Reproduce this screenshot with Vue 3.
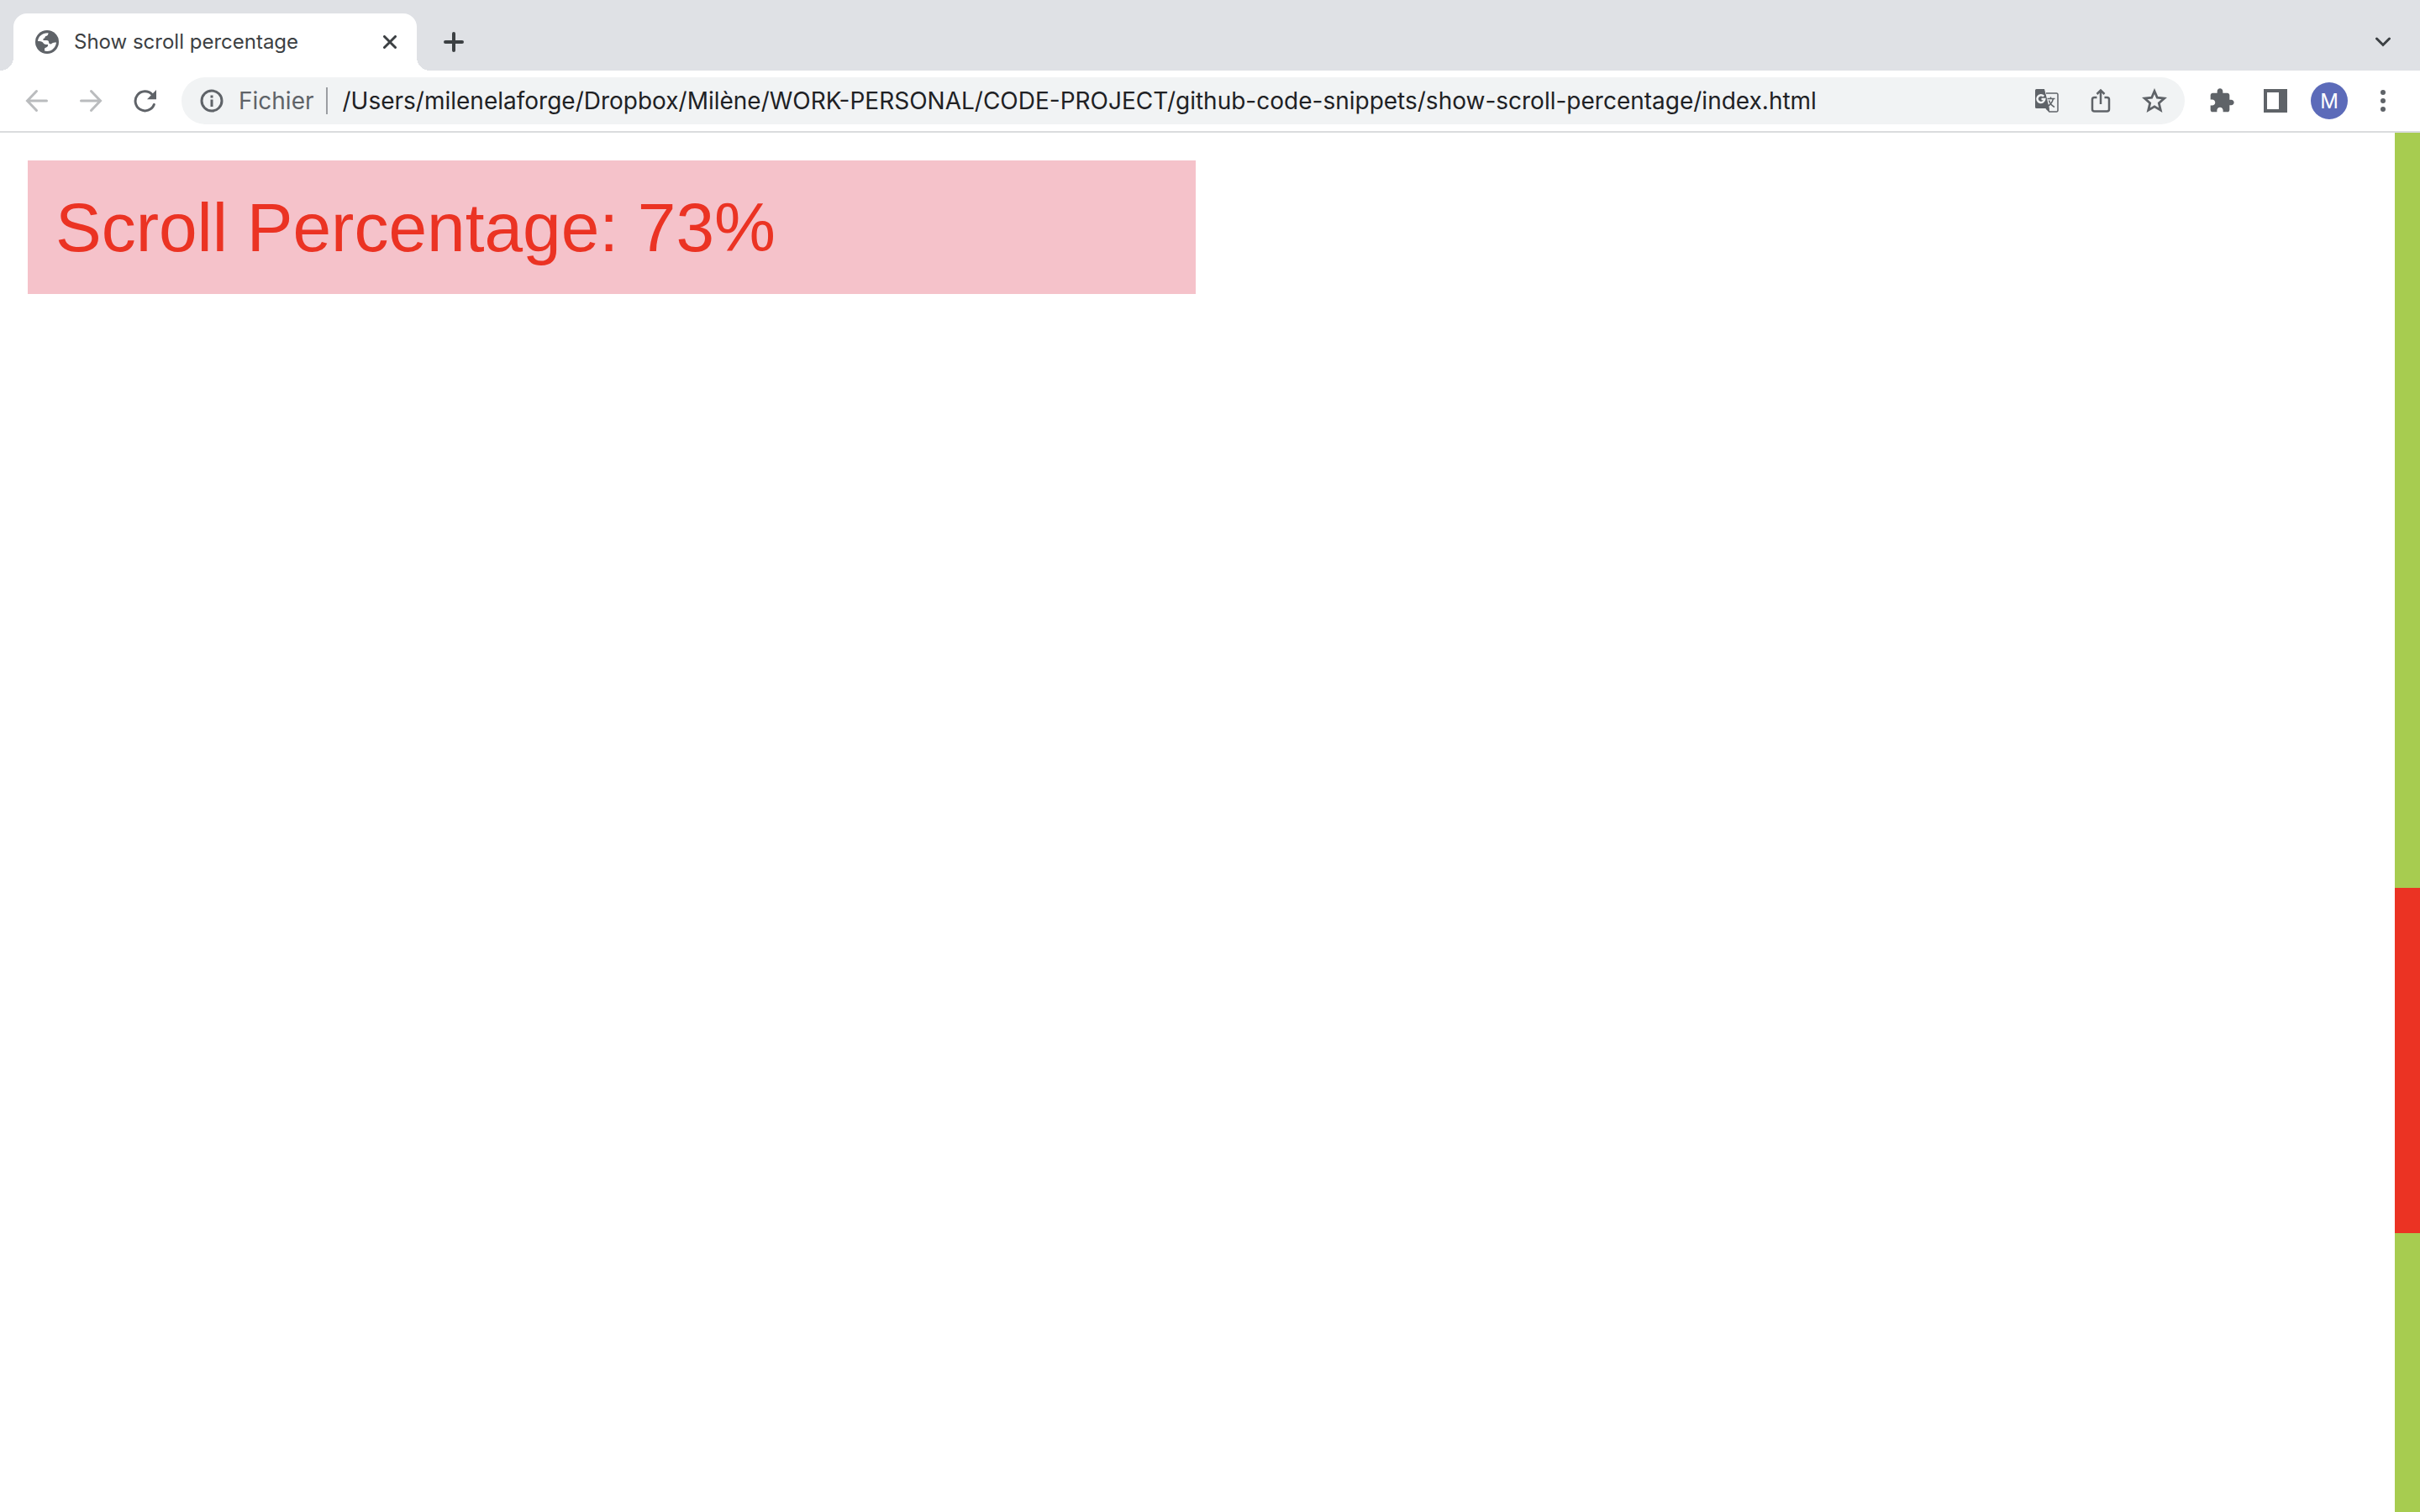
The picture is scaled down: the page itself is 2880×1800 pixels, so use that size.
<script setup>
import { ref, computed } from 'vue'

const title = 'Show scroll percentage'
const url = ref('/Users/milenelaforge/Dropbox/Milène/WORK-PERSONAL/CODE-PROJECT/github-code-snippets/show-scroll-percentage/index.html')
const percentage = ref(73)
const thumbShare = 25

const before = computed(() => (100 - thumbShare) * percentage.value)
const after = computed(() => (100 - thumbShare) * (100 - percentage.value))
</script>

<template>
  <div class="browser">
    <header>
      <div class="tab-strip">
        <div class="tab">
          <svg class="icon" width="28" height="28" viewBox="0 0 28 28" aria-hidden="true">
            <circle cx="14" cy="14" r="14" fill="#5f6368" />
            <path fill="#fff" d="M3 13C3.5 7.500 8 3 15.500 3.200C15.700 5.500 14 7 12.500 7C11.500 7.200 11.500 9 11 9.500L9.500 10V12H13.500C15.500 12 16.200 13.300 16.200 15C17 17 19 16.500 20 15.500C21 14.500 23 14.500 25 14.500C24.500 20 20 25 14 25L11 24.600V22C11 20.500 15 20.800 15 18V17C11 17 10.500 16.500 9 14.500C8 13.300 5 13 3 13Z" />
          </svg>
          <span class="tab-title">{{ title }}</span>
          <button class="close" type="button" aria-label="Close tab">
            <svg width="16" height="16" viewBox="0 0 16 16"><path d="M1.500 1.500l13 13M14.500 1.500l-13 13" fill="none" stroke="#3c4043" stroke-width="3" stroke-linecap="round" /></svg>
          </button>
        </div>
        <button class="new-tab" type="button" aria-label="New tab">
          <svg width="24" height="24" viewBox="0 0 24 24"><path d="M12 2v20M2 12h20" fill="none" stroke="#3c4043" stroke-width="4" stroke-linecap="round" /></svg>
        </button>
        <button class="tab-search" type="button" aria-label="Search tabs">
          <svg width="18" height="12" viewBox="0 0 18 12"><path d="M1.500 2L9 9.500L16.500 2" fill="none" stroke="#3c4043" stroke-width="3" stroke-linecap="round" /></svg>
        </button>
      </div>

      <div class="toolbar">
        <nav class="navigation" aria-label="History">
          <button type="button" aria-label="Back" disabled>
            <svg width="28" height="28" viewBox="0 0 28 28"><path d="M13.500 2.500L2.500 14L13.500 25.500M3 14H25.500" fill="none" stroke="#babcbe" stroke-width="3" stroke-linecap="round" /></svg>
          </button>
          <button type="button" aria-label="Forward" disabled>
            <svg width="28" height="28" viewBox="0 0 28 28"><path d="M14.500 2.500L25.500 14L14.500 25.500M25 14H2.500" fill="none" stroke="#babcbe" stroke-width="3" stroke-linecap="round" /></svg>
          </button>
          <button type="button" aria-label="Reload">
            <svg width="28" height="28" viewBox="0 0 28 28"><path d="M25.300 18.500A11.500 11.500 0 1 1 23 6.500" fill="none" stroke="#5f6368" stroke-width="3" stroke-linecap="round" /><path d="M28 1V12.200H17Z" fill="#5f6368" /></svg>
          </button>
        </nav>

        <div class="omnibox">
          <button class="site-info" type="button">
            <svg width="28" height="28" viewBox="0 0 28 28" aria-hidden="true"><circle cx="14" cy="14" r="12" fill="none" stroke="#5f6368" stroke-width="3" /><path d="M12.500 12.500h3V21h-3zM12.500 7.500h3v3h-3z" fill="#5f6368" /></svg>
            <span>Fichier</span>
          </button>
          <input v-model="url" class="address" type="text" aria-label="Address" spellcheck="false" />
          <div class="actions">
            <button type="button" aria-label="Translate this page">
              <svg width="30" height="30" viewBox="0 0 30 30">
                <path d="M14 6H26.500a1.500 1.500 0 0 1 1.500 1.500V26.500a1.500 1.500 0 0 1-1.500 1.500H18L14 24" fill="none" stroke="#5f6368" stroke-width="1.500" />
                <path d="M15.500 12.500H24.500M19.500 10.500v2M22.500 12.500C21.500 17 18.500 20 15.500 22M17.500 14.500C18.500 18 20.500 20.500 24 22.500" fill="none" stroke="#5f6368" stroke-width="1.500" />
                <path d="M2.500 1H12L17.800 23.500L18 28.800L14.500 24H2.500A1.500 1.500 0 0 1 1 22.500V2.500A1.500 1.500 0 0 1 2.500 1Z" fill="#5f6368" />
                <path d="M11.200 9.700A4.400 4.400 0 1 0 12.300 13H8.500" fill="none" stroke="#f1f3f4" stroke-width="2.500" />
              </svg>
            </button>
            <button type="button" aria-label="Share this page">
              <svg width="30" height="30" viewBox="0 0 30 30"><path d="M10.500 11H7.500A2.500 2.500 0 0 0 5 13.500V25A2.500 2.500 0 0 0 7.500 27.500H22.500A2.500 2.500 0 0 0 25 25V13.500A2.500 2.500 0 0 0 22.500 11H19.500M15 19V3M10.500 7L15 2.500L19.500 7" fill="none" stroke="#5f6368" stroke-width="2.500" /></svg>
            </button>
            <button type="button" aria-label="Bookmark this tab">
              <svg width="30" height="30" viewBox="0 0 30 30"><path d="M15 3.500L18.300 11.200L26.700 12L20.300 17.700L22.300 26.200L15 21.800L7.700 26.200L9.700 17.700L3.300 12L11.700 11.200Z" fill="none" stroke="#5f6368" stroke-width="2.800" /></svg>
            </button>
          </div>
        </div>

        <div class="actions tools">
          <button type="button" aria-label="Extensions">
            <svg width="32" height="32" viewBox="0 0 24 24"><path d="M20.500 11H19V7c0-1.100-.9-2-2-2h-4V3.500C13 2.120 11.880 1 10.500 1S8 2.120 8 3.500V5H4c-1.100 0-1.990.9-1.990 2v3.800H3.500c1.490 0 2.700 1.210 2.700 2.700s-1.210 2.700-2.700 2.700H2V20c0 1.100.9 2 2 2h3.800v-1.500c0-1.490 1.210-2.700 2.700-2.700 1.490 0 2.700 1.210 2.700 2.700V22H17c1.100 0 2-.9 2-2v-4h1.500c1.380 0 2.500-1.120 2.500-2.500S21.880 11 20.500 11z" fill="#5f6368" /></svg>
          </button>
          <button type="button" aria-label="Side panel">
            <svg width="28" height="28" viewBox="0 0 28 28"><path d="M0 0H28V28H0ZM4 4V24H18V4Z" fill="#5f6368" fill-rule="evenodd" /></svg>
          </button>
          <button class="avatar" type="button" aria-label="Profile M">M</button>
          <button type="button" aria-label="Menu">
            <svg width="28" height="28" viewBox="0 0 28 28" fill="#5f6368"><circle cx="14" cy="4" r="3" /><circle cx="14" cy="14" r="3" /><circle cx="14" cy="24" r="3" /></svg>
          </button>
        </div>
      </div>
    </header>

    <div class="viewport">
      <main>
        <p class="readout">Scroll Percentage: {{ percentage }}%</p>
      </main>
      <div class="scrollbar">
        <div :style="{ flexGrow: before }"></div>
        <div class="thumb" :style="{ flexGrow: thumbShare * 100 }"></div>
        <div :style="{ flexGrow: after }"></div>
      </div>
    </div>
  </div>
</template>

<style>
body {
  margin: 0;
}
</style>

<style scoped>
.browser {
  display: flex;
  flex-direction: column;
  min-height: 100vh;
  background: #fff;
  font-family: Inter, "Liberation Sans", sans-serif;
}

button {
  display: flex;
  align-items: center;
  justify-content: center;
  flex: none;
  padding: 0;
  border: 0;
  background: none;
  font: inherit;
}

svg {
  display: block;
  flex: none;
}

.tab-strip {
  display: flex;
  box-sizing: border-box;
  height: 84px;
  padding: 16px 16px 0;
  background: #dfe1e5;
}

.tab {
  position: relative;
  display: flex;
  align-items: center;
  box-sizing: border-box;
  width: 480px;
  padding: 0 24px 0 26px;
  border-radius: 16px 16px 0 0;
  background: #fff;
}

.tab::before,
.tab::after {
  content: "";
  position: absolute;
  bottom: 0;
  width: 16px;
  height: 16px;
}

.tab::before {
  right: 100%;
  background: radial-gradient(circle at 0 0, transparent 16px, #fff 16px);
}

.tab::after {
  left: 100%;
  background: radial-gradient(circle at 100% 0, transparent 16px, #fff 16px);
}

.tab-title {
  flex: 1;
  margin-left: 18px;
  color: #3c4043;
  font-size: 24px;
  line-height: 32px;
}

.new-tab {
  width: 56px;
  margin-left: 16px;
}

.tab-search {
  width: 56px;
  margin-left: auto;
}

.toolbar {
  display: flex;
  align-items: center;
  height: 72px;
  border-bottom: 2px solid #dadcde;
}

.navigation {
  display: flex;
  gap: 36px;
  padding: 0 30px;
}

.omnibox {
  display: flex;
  flex: 1;
  align-items: center;
  box-sizing: border-box;
  height: 56px;
  padding: 0 14px 0 22px;
  border-radius: 28px;
  background: #f1f3f4;
  font-size: 28px;
}

.site-info {
  gap: 18px;
  height: 32px;
  padding-right: 14px;
  border-right: 2px solid #9b9ea2;
  color: #5f6368;
}

.address {
  flex: 1;
  min-width: 0;
  height: 40px;
  padding: 0 0 0 18px;
  border: 0;
  outline: 0;
  background: none;
  color: #202124;
  font: inherit;
}

.actions {
  display: flex;
  align-items: center;
  gap: 20px;
}

.actions button {
  width: 44px;
  height: 44px;
}

.tools {
  padding: 0 22px;
}

.actions .avatar {
  border-radius: 50%;
  background: #5c6bb9;
  color: #fff;
  font-size: 24px;
}

.viewport {
  display: flex;
  flex: 1;
}

main {
  flex: 1;
  padding: 33px;
}

.readout {
  box-sizing: border-box;
  width: calc(50% - 2px);
  margin: 0;
  padding: 33px;
  background: #f5c2ca;
  color: #eb3323;
  font-family: "Liberation Sans", Helvetica, sans-serif;
  font-size: 82px;
  line-height: 93px;
}

.scrollbar {
  display: flex;
  flex-direction: column;
  width: 30px;
  background: #a7cc50;
}

.thumb {
  background: #eb3323;
}
</style>
